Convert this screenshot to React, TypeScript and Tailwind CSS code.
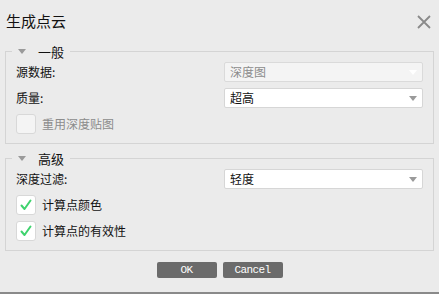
import React from "react";

const cjk = { fontFamily: '"Noto Sans CJK SC", "Liberation Sans", sans-serif' };

const Arrow = ({ light }: { light?: boolean }) => (
  <svg width="8" height="5" viewBox="0 0 8 5" className="shrink-0">
    <path d="M0 0 L8 0 L4 5 Z" fill={light ? "#ffffff" : "#9a9a9a"} />
  </svg>
);

const Select = ({ value, disabled }: { value: string; disabled?: boolean }) => (
  <div
    className={`w-[199px] h-[20px] flex items-center justify-between pl-[5px] pr-[5px] border rounded-[2px] ${
      disabled ? "bg-[#f4f4f4] border-[#dadada] text-[#8c8c8c]" : "bg-white border-[#d6d6d6] text-[#111]"
    }`}
  >
    <span className="text-[12px] leading-none">{value}</span>
    <Arrow light={disabled} />
  </div>
);

const Check = ({ checked, label, disabled }: { checked?: boolean; label: string; disabled?: boolean }) => (
  <div className="flex items-center gap-[6px] h-[20px]">
    <div
      className={`w-[20px] h-[20px] rounded-[3px] border flex items-center justify-center ${
        disabled ? "bg-[#f4f4f4] border-[#d8d8d8]" : "bg-white border-[#d8d8d8]"
      }`}
    >
      {checked && (
        <svg width="12" height="12" viewBox="0 0 12 12">
          <path d="M1.5 6.5 L4.5 10 L10.5 1.5" fill="none" stroke="#3fd36e" strokeWidth="2" strokeLinecap="round" strokeLinejoin="round" />
        </svg>
      )}
    </div>
    <span className={`text-[12px] leading-none ${disabled ? "text-[#8c8c8c]" : "text-[#111]"}`}>{label}</span>
  </div>
);

const Group = ({ title, children }: { title: string; children: React.ReactNode }) => (
  <fieldset className="mx-[5px] border border-[#d4d4d4] px-[10px] pb-[9px]">
    <legend className="ml-[-4px] h-[20px] flex items-center gap-[12px] pl-[6px] pr-[6px]">
      <Arrow />
      <span className="text-[13px] leading-none text-[#111]">{title}</span>
    </legend>
    <div className="flex flex-col gap-[6px] pt-[1px]">{children}</div>
  </fieldset>
);

const Row = ({ label, children }: { label: string; children: React.ReactNode }) => (
  <div className="flex items-center justify-between">
    <span className="text-[12px] leading-none text-[#111]">{label}</span>
    {children}
  </div>
);

export default function App() {
  return (
    <div className="w-[439px] h-[294px] bg-[#ebebeb] flex flex-col" style={cjk}>
      <div className="h-[41px] flex items-center justify-between pl-[6px] pr-[8px] pt-[2px]">
        <span className="text-[15px] text-[#111]">生成点云</span>
        <svg width="14" height="14" viewBox="0 0 14 14">
          <path d="M1 1 L13 13 M13 1 L1 13" stroke="#8a8a8a" strokeWidth="1.8" />
        </svg>
      </div>
      <Group title="一般">
        <Row label="源数据:">
          <Select value="深度图" disabled />
        </Row>
        <Row label="质量:">
          <Select value="超高" />
        </Row>
        <Check label="重用深度贴图" disabled />
      </Group>
      <div className="h-[4px]" />
      <Group title="高级">
        <Row label="深度过滤:">
          <Select value="轻度" />
        </Row>
        <Check checked label="计算点颜色" />
        <Check checked label="计算点的有效性" />
      </Group>
      <div className="flex justify-center gap-[6px] mt-[11px]">
        {["OK", "Cancel"].map((b) => (
          <button
            key={b}
            className="w-[60px] h-[16px] rounded-[2px] bg-[#6b6b6b] text-white text-[11px] leading-none tracking-[-0.6px]"
            style={{ fontFamily: '"Liberation Mono", monospace' }}
          >
            {b}
          </button>
        ))}
      </div>
      <div className="flex-1" />
      <div className="h-[2px] bg-[#8a8a8a]" />
    </div>
  );
}
